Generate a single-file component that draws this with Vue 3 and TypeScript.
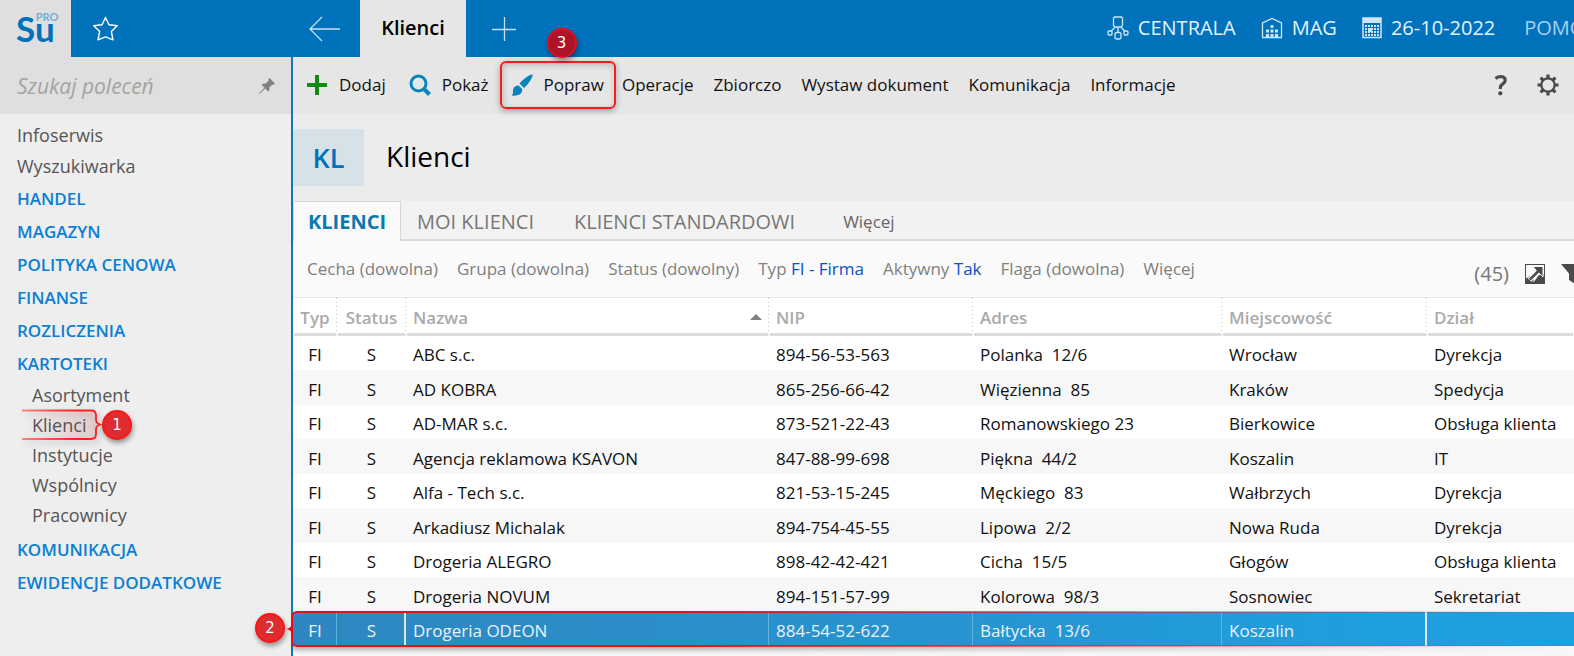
<script setup lang="ts">
import { ref } from 'vue'

interface Section {
  label: string
  children?: string[]
}

interface Client {
  typ: string
  status: string
  nazwa: string
  nip: string
  adres: string
  miejscowosc: string
  dzial: string
}

const shortcuts: string[] = ['Infoserwis', 'Wyszukiwarka']

const sections: Section[] = [
  { label: 'HANDEL' },
  { label: 'MAGAZYN' },
  { label: 'POLITYKA CENOWA' },
  { label: 'FINANSE' },
  { label: 'ROZLICZENIA' },
  { label: 'KARTOTEKI', children: ['Asortyment', 'Klienci', 'Instytucje', 'Wspólnicy', 'Pracownicy'] },
  { label: 'KOMUNIKACJA' },
  { label: 'EWIDENCJE DODATKOWE' },
]

const menus: string[] = ['Operacje', 'Zbiorczo', 'Wystaw dokument', 'Komunikacja', 'Informacje']

const filters: { name: string; value?: string }[] = [
  { name: 'Cecha (dowolna)' },
  { name: 'Grupa (dowolna)' },
  { name: 'Status (dowolny)' },
  { name: 'Typ', value: 'FI - Firma' },
  { name: 'Aktywny', value: 'Tak' },
  { name: 'Flaga (dowolna)' },
  { name: 'Więcej' },
]

const row = (nazwa: string, nip: string, adres: string, miejscowosc: string, dzial: string): Client => ({
  typ: 'FI',
  status: 'S',
  nazwa,
  nip,
  adres,
  miejscowosc,
  dzial,
})

const clients: Client[] = [
  row('ABC s.c.', '894-56-53-563', 'Polanka  12/6', 'Wrocław', 'Dyrekcja'),
  row('AD KOBRA', '865-256-66-42', 'Więzienna  85', 'Kraków', 'Spedycja'),
  row('AD-MAR s.c.', '873-521-22-43', 'Romanowskiego 23', 'Bierkowice', 'Obsługa klienta'),
  row('Agencja reklamowa KSAVON', '847-88-99-698', 'Piękna  44/2', 'Koszalin', 'IT'),
  row('Alfa - Tech s.c.', '821-53-15-245', 'Męckiego  83', 'Wałbrzych', 'Dyrekcja'),
  row('Arkadiusz Michalak', '894-754-45-55', 'Lipowa  2/2', 'Nowa Ruda', 'Dyrekcja'),
  row('Drogeria ALEGRO', '898-42-42-421', 'Cicha  15/5', 'Głogów', 'Obsługa klienta'),
  row('Drogeria NOVUM', '894-151-57-99', 'Kolorowa  98/3', 'Sosnowiec', 'Sekretariat'),
  row('Drogeria ODEON', '884-54-52-622', 'Bałtycka  13/6', 'Koszalin', ''),
]

const query = ref('')
const selected = ref(8)
</script>

<template>
  <div class="app">
    <header class="top">
      <a class="logo" href="#" aria-label="Su PRO">
        <span class="logo-su">Su</span><span class="logo-pro">PRO</span>
      </a>
      <button class="top-btn star" type="button" aria-label="Ulubione">
        <svg width="27" height="27" viewBox="0 0 27 27">
          <path d="M13.500 2.500 17 9.800 25.300 10.700 19.300 16.400 21 24.800 13.500 21.800 6 24.800 7.700 16.400 1.700 10.700 10 9.800Z" fill="none" stroke="#fff" stroke-width="1.400" stroke-linejoin="round" />
        </svg>
      </button>
      <button class="top-btn back" type="button" aria-label="Wstecz">
        <svg width="32" height="26" viewBox="0 0 32 26">
          <path d="M31 13H1M13 1 1 13 13 25" fill="none" stroke="#c4e0f3" stroke-width="1.300" />
        </svg>
      </button>
      <button class="window-tab" type="button">Klienci</button>
      <button class="top-btn plus" type="button" aria-label="Nowa karta">
        <svg width="24" height="26" viewBox="0 0 24 26">
          <path d="M0 13.500H24M12.500 1V25" fill="none" stroke="#c4e0f3" stroke-width="1.300" />
        </svg>
      </button>
      <div class="context">
        <button class="ctx" type="button">
          <svg width="22" height="24" viewBox="0 0 22 24" fill="none" stroke="#cfe6f5" stroke-width="1.300">
            <path d="M7.500 1h7l1 1v7.500L14 11H8L6.500 9.500V2ZM8 11 4 15.500M11 11v5M14 11l4 4.500" />
            <rect x="1" y="15" width="4" height="4" rx="1" />
            <rect x="8" y="16.500" width="6" height="6.500" rx="2" />
            <rect x="17" y="15" width="4" height="4" rx="1" />
          </svg>
          CENTRALA
        </button>
        <button class="ctx" type="button">
          <svg width="22" height="24" viewBox="0 0 22 24">
            <path d="M1.500 21.500V7L11 2.500 20.500 7v14.500Z" fill="none" stroke="#cfe6f5" stroke-width="1.300" />
            <path d="M9.500 9h3v3h-3zM5 13.500h3v3H5zM9.500 13.500h3v3h-3zM14 13.500h3v3h-3zM5 18h3v3H5zM9.500 18h3v3h-3zM14 18h3v3h-3z" fill="#cfe6f5" />
          </svg>
          MAG
        </button>
        <button class="ctx" type="button">
          <svg width="20" height="22" viewBox="0 0 20 22">
            <path d="M1 1h18v19.500H1Z" fill="none" stroke="#cfe6f5" stroke-width="1.500" />
            <path d="M1 1h18v5H1Z" fill="#cfe6f5" />
            <path d="M3 9h14M3 12h14M3 15h14M3 18h14" stroke="#cfe6f5" stroke-width="1.800" stroke-dasharray="2 1" />
            <path d="M6 11h4v4H6z" fill="#cfe6f5" />
          </svg>
          26-10-2022
        </button>
        <button class="ctx help" type="button">POMOC</button>
      </div>
    </header>

    <div class="body">
      <aside class="side">
        <div class="search">
          <input v-model="query" type="text" placeholder="Szukaj poleceń" aria-label="Szukaj poleceń" />
          <button type="button" aria-label="Przypnij">
            <svg width="18" height="18" viewBox="0 0 18 18">
              <path d="M11.500 1 17 6.500 15.500 7.800 14.400 7.400 11.500 10.300Q12 13 10.300 14.500L7.200 11.500 2 16.500 0.800 17.200 1.500 16 6.500 10.800 3.500 7.700Q5 6 7.700 6.500L10.600 3.600 10.200 2.500Z" fill="#808080" />
            </svg>
          </button>
        </div>
        <nav class="nav" aria-label="Moduły">
          <a v-for="s in shortcuts" :key="s" class="shortcut" href="#">{{ s }}</a>
          <template v-for="section in sections" :key="section.label">
            <a class="section" href="#">{{ section.label }}</a>
            <div v-if="section.children" class="children">
              <a v-for="child in section.children" :key="child" class="child" href="#">
                <template v-if="child === 'Klienci'">
                  <svg class="frame-left" width="80" height="32" viewBox="0 0 80 32">
                    <defs>
                      <linearGradient id="fadeStroke" gradientUnits="userSpaceOnUse" x1="0" y1="0" x2="76" y2="0">
                        <stop offset="0" stop-color="#ff2020" stop-opacity="0.500" />
                        <stop offset="0.700" stop-color="#ff2020" stop-opacity="1" />
                      </linearGradient>
                      <linearGradient id="fadeFill" x1="0" y1="0" x2="1" y2="0">
                        <stop offset="0" stop-color="#e05050" stop-opacity="0" />
                        <stop offset="1" stop-color="#e05050" stop-opacity="0.180" />
                      </linearGradient>
                    </defs>
                    <path d="M0 1.500H69Q74 1.500 74 6.500V11Q74 14 78 15.500Q74 17 74 20V25Q74 30 69 30H0" fill="url(#fadeFill)" stroke="url(#fadeStroke)" stroke-width="1.800" />
                  </svg>
                  <span class="badge badge-one">1</span>
                </template>
                <span class="child-text">{{ child }}</span>
              </a>
            </div>
          </template>
        </nav>
      </aside>

      <main class="main">
        <div class="toolbar">
          <button class="tool" type="button">
            <svg width="22" height="22" viewBox="0 0 22 22"><path d="M9 1h4v8h8v4h-8v8H9v-8H1V9h8Z" fill="#138a13" /></svg>
            Dodaj
          </button>
          <button class="tool show" type="button">
            <svg width="22" height="22" viewBox="0 0 22 22" fill="none" stroke="#0a84bd">
              <circle cx="9.500" cy="9.500" r="7.500" stroke-width="3" />
              <path d="M15 15 20.500 20.500" stroke-width="4" />
            </svg>
            Pokaż
          </button>
          <button class="tool marked" type="button">
            <svg width="22" height="22" viewBox="0 0 22 22" fill="#0a84bd">
              <path d="M21.500 0.500Q22 2 19 7 16.500 11 13 14L8.500 9.500Q12 5.500 16 2.800 20 0 21.500 0.500Z" />
              <path d="M7.200 11.200 11.200 15Q11.500 18.500 8.500 20.500 6 22 0.500 21.500 2.500 20 2 16.500 2 12 7.200 11.200Z" />
            </svg>
            Popraw
            <span class="badge badge-three">3</span>
          </button>
          <button v-for="m in menus" :key="m" class="tool" type="button">{{ m }}</button>
          <div class="tool-end">
            <button class="icon-btn" type="button" aria-label="Pomoc">
              <svg width="14" height="22" viewBox="0 0 14 22">
                <path d="M1.500 4.500Q4 2.500 7 2.500 11.200 2.700 11.200 6.200 11.200 8.200 8.800 9.800 6.300 11.500 6.300 13.500V15" fill="none" stroke="#4a4a4a" stroke-width="3.200" />
                <circle cx="6.300" cy="19.300" r="2.100" fill="#4a4a4a" />
              </svg>
            </button>
            <button class="icon-btn" type="button" aria-label="Ustawienia">
              <svg width="22" height="22" viewBox="0 0 22 22" fill="none" stroke="#4a4a4a">
                <circle cx="11" cy="11" r="6.700" stroke-width="2.200" />
                <path d="M11 4.500V.5M11 17.500v4M4.500 11h-4M17.500 11h4M6.400 6.400 3.600 3.600M15.600 6.400l2.800-2.800M6.400 15.600l-2.800 2.800M15.600 15.600l2.800 2.800" stroke-width="3.200" />
              </svg>
            </button>
          </div>
        </div>

        <div class="title">
          <span class="tile">KL</span>
          <h1>Klienci</h1>
        </div>

        <div class="tabs" role="tablist">
          <button class="tab active" type="button" role="tab" aria-selected="true">KLIENCI</button>
          <button class="tab" type="button" role="tab" aria-selected="false">MOI KLIENCI</button>
          <button class="tab wide" type="button" role="tab" aria-selected="false">KLIENCI STANDARDOWI</button>
          <button class="tab more" type="button">Więcej</button>
        </div>

        <div class="filters">
          <button v-for="f in filters" :key="f.name" class="filter" type="button">
            {{ f.name }}<span v-if="f.value" class="value">{{ ' ' + f.value }}</span>
          </button>
          <div class="filter-end">
            <span class="count">(45)</span>
            <button class="icon-btn" type="button" aria-label="Powiększ">
              <svg width="20" height="20" viewBox="0 0 20 20">
                <path d="M0 0h20v20H0Z" fill="#4a4a4a" />
                <path d="M1 1H19V10L9 18 1 16Z" fill="#fafafa" />
                <path d="M1 19V14.500L5 12 9 16 6.500 19ZM19 19H8L14 11H19Z" fill="#4a4a4a" />
                <path d="M4.500 16 13 7.500" stroke="#fafafa" stroke-width="5" />
                <path d="M8 2.500H18V13L14.500 9.500 11 6.500Z" fill="#4a4a4a" stroke="#fafafa" stroke-width="1" />
                <path d="M4.800 15.700 14 6.500" stroke="#4a4a4a" stroke-width="2.600" />
              </svg>
            </button>
            <button class="icon-btn" type="button" aria-label="Filtruj">
              <svg width="22" height="20" viewBox="0 0 22 20"><path d="M0 0h22L14 9.500V20L8 16V9.500Z" fill="#4a4a4a" /></svg>
            </button>
          </div>
        </div>

        <table class="grid">
          <colgroup>
            <col class="c-typ" /><col class="c-status" /><col class="c-name" /><col class="c-nip" />
            <col class="c-addr" /><col class="c-city" /><col />
          </colgroup>
          <thead>
            <tr>
              <th class="mid">Typ</th>
              <th class="mid">Status</th>
              <th aria-sort="ascending">
                <div class="sorted">
                  Nazwa
                  <svg width="12" height="8" viewBox="0 0 12 8"><path d="M0 7 6 1l6 6Z" fill="#808080" /></svg>
                </div>
              </th>
              <th>NIP</th>
              <th>Adres</th>
              <th>Miejscowość</th>
              <th>Dział</th>
            </tr>
          </thead>
          <tbody>
            <tr v-for="(c, i) in clients" :key="c.nazwa" :class="{ selected: i === selected }" @click="selected = i">
              <td class="mid">
                {{ c.typ }}
                <template v-if="i === 8">
                  <span class="frame-row"></span>
                  <svg class="pointer" width="6" height="10" viewBox="0 0 6 10">
                    <path d="M6 0V10Q5 6 0.500 5 5 4 6 0Z" fill="#e01018" />
                  </svg>
                  <span class="badge badge-two">2</span>
                </template>
              </td>
              <td class="mid">{{ c.status }}</td>
              <td>{{ c.nazwa }}</td>
              <td>{{ c.nip }}</td>
              <td>{{ c.adres }}</td>
              <td>{{ c.miejscowosc }}</td>
              <td>{{ c.dzial }}</td>
            </tr>
          </tbody>
        </table>
      </main>
    </div>
  </div>
</template>

<style>
body {
  margin: 0;
}
</style>

<style scoped>
.app {
  display: flex;
  flex-direction: column;
  min-height: 100vh;
  overflow: hidden;
  font-family: "Open Sans", "Noto Sans", sans-serif;
  font-size: 17px;
  color: #111;
}

button {
  padding: 0;
  border: 0;
  background: none;
  font: inherit;
  color: inherit;
  white-space: nowrap;
  cursor: pointer;
}

a {
  color: inherit;
  text-decoration: none;
}

svg {
  display: block;
  flex: none;
}

.top {
  display: flex;
  align-items: stretch;
  height: 57px;
  background: #0072bc;
}

.logo {
  display: flex;
  align-items: flex-start;
  flex: none;
  box-sizing: border-box;
  width: 71px;
  padding: 6px 0 0 16px;
  background: #dfdfdf;
  font-family: Lato, sans-serif;
}

.logo-su {
  font-size: 35px;
  line-height: 44px;
  font-weight: 700;
  color: #0072bc;
}

.logo-pro {
  margin-left: -19px;
  padding-top: 5px;
  font-size: 11px;
  line-height: 12px;
  font-weight: 700;
  color: #72aed6;
}

.top-btn {
  display: flex;
  align-items: center;
  justify-content: center;
}

.star {
  width: 68px;
}

.back {
  width: 70px;
  margin-left: 151px;
}

.window-tab {
  width: 106px;
  padding-bottom: 2px;
  background: #e6e6e6;
  font-size: 20px;
  font-weight: 600;
  color: #000;
}

.plus {
  width: 76px;
}

.context {
  display: flex;
  align-items: center;
  gap: 25px;
  margin-left: auto;
  margin-right: -24px;
  padding-bottom: 2px;
  font-size: 20px;
  color: #e3f1fa;
}

.ctx {
  display: flex;
  align-items: center;
  gap: 9px;
  line-height: 28px;
}

.help {
  margin-left: 4px;
  color: #a9d0ea;
}

.body {
  display: flex;
  flex: 1;
}

.side {
  flex: none;
  width: 291px;
  border-right: 2px solid #1478b4;
  background: #eee;
}

.search {
  display: flex;
  align-items: center;
  height: 57px;
  padding: 0 15px 0 17px;
  background: #dfdfdf;
}

.search input {
  flex: 1;
  min-width: 0;
  padding: 0;
  border: 0;
  outline: 0;
  background: none;
  font: italic 21px/28px "Open Sans", "Noto Sans", sans-serif;
  color: #555;
}

.search input::placeholder {
  color: #a3a3a3;
}

.nav {
  display: flex;
  flex-direction: column;
  align-items: flex-start;
  padding: 6px 17px;
  font-size: 18px;
  color: #555;
}

.shortcut {
  line-height: 31px;
}

.section {
  font-size: 17px;
  font-weight: 600;
  line-height: 33px;
  color: #0a7fd6;
}

.children {
  display: flex;
  flex-direction: column;
  align-items: flex-start;
  padding: 0 0 3px 15px;
}

.child {
  position: relative;
  line-height: 30px;
}

.child-text {
  position: relative;
}

.frame-left {
  position: absolute;
  left: -10px;
  top: -1px;
  filter: drop-shadow(2px 3px 3px rgba(0, 0, 0, 0.25));
}

.badge {
  position: absolute;
  box-sizing: border-box;
  width: 30px;
  height: 30px;
  border: 2px solid #ff1414;
  border-radius: 50%;
  background: #de2c30;
  box-shadow: 1px 3px 5px rgba(0, 0, 0, 0.4);
  font: 15px/26px "DejaVu Sans", sans-serif;
  text-align: center;
  color: #fff;
  z-index: 2;
}

.badge-one {
  left: 70px;
  top: 0;
}

.badge-two {
  left: -38px;
  top: 1px;
}

.badge-three {
  left: 45px;
  top: -35px;
  border-color: #e80c1c;
  background: #ad1428;
}

.main {
  display: flex;
  flex-direction: column;
  flex: 1;
  min-width: 0;
  background: #f7f7f7;
}

.toolbar {
  display: flex;
  align-items: center;
  gap: 20px;
  box-sizing: border-box;
  height: 57px;
  padding: 0 15px 2px 13px;
  background: #e6e6e6;
}

.tool {
  display: flex;
  align-items: center;
  gap: 11px;
  line-height: 26px;
}

.show {
  margin-left: 3px;
}

.marked {
  position: relative;
  height: 48px;
  margin: 0 -14px 0 -9px;
  padding: 0 10px 0 9px;
  border: 2px solid #f81c1c;
  border-radius: 6px;
  box-shadow: 0 2px 6px rgba(0, 0, 0, 0.3), inset 1px 2px 6px rgba(0, 0, 0, 0.2);
}

.tool-end {
  display: flex;
  align-items: center;
  gap: 29px;
  margin-left: auto;
}

.title {
  display: flex;
  align-items: center;
  gap: 22px;
  height: 87px;
  background: #ececec;
}

.tile {
  width: 71px;
  background: #d7e2e8;
  font-size: 27px;
  font-weight: 600;
  line-height: 57px;
  text-align: center;
  color: #0072bc;
}

h1 {
  margin: 0;
  padding-bottom: 3px;
  font-size: 28px;
  font-weight: 400;
  color: #000;
}

.tabs {
  display: flex;
  height: 40px;
  box-shadow: inset 0 -2px #dadada;
  background: #f2f2f2;
}

.tab {
  padding: 1px 16px 0;
  font-size: 20px;
  line-height: 40px;
  color: #777;
}

.tab.active {
  padding: 0 14px;
  border: 1px solid #d6d6d6;
  border-bottom: 0;
  background: #fafafa;
  font-weight: 700;
  line-height: 40px;
  color: #0a79ad;
}

.tab.wide {
  padding: 1px 24px 0;
}

.tab.more {
  padding: 1px 24px 0;
  font-size: 17px;
  color: #666;
}

.filters {
  display: flex;
  align-items: center;
  gap: 19px;
  height: 56px;
  padding-left: 14px;
  background: #fafafa;
  color: #808080;
}

.filter {
  line-height: 56px;
}

.value {
  white-space: pre;
  color: #0a50c8;
}

.filter-end {
  display: flex;
  align-items: center;
  gap: 16px;
  margin: 9px -9px 0 auto;
}

.count {
  font-size: 20px;
  line-height: 28px;
  color: #777;
}

.grid {
  width: 100%;
  border-spacing: 0;
  table-layout: fixed;
  background: #fff;
}

.c-typ {
  width: 44px;
}

.c-status {
  width: 69px;
}

.c-name {
  width: 363px;
}

.c-nip {
  width: 204px;
}

.c-addr {
  width: 249px;
}

.c-city {
  width: 205px;
}

th {
  position: relative;
  box-sizing: border-box;
  height: 39px;
  padding: 0 7px;
  border-top: 1px solid #e6e6e6;
  background: repeating-linear-gradient(#c4c4c4 0 1px, transparent 1px 4px) right / 1px 100% no-repeat;
  font-weight: 600;
  text-align: left;
  color: #aaa;
}

th:last-child {
  background: none;
}

th::after {
  content: "";
  position: absolute;
  right: 1px;
  bottom: 0;
  left: 1px;
  height: 3px;
  background: #dcdcdc;
}

.sorted {
  display: flex;
  align-items: center;
  justify-content: space-between;
}

td {
  height: 31px;
  padding: 3px 0 0 7px;
  line-height: 31px;
  white-space: pre;
  color: #111;
}

th.mid,
td.mid {
  padding-right: 0;
  padding-left: 0;
  text-align: center;
}

td.mid {
  white-space: nowrap;
}

tbody tr:nth-child(even) td {
  height: 32px;
  background: #f7f7f7;
}

tbody .selected {
  position: relative;
  background: linear-gradient(90deg, #2f86c0, #2794cf 50%, #1e9fe0 85%);
}

tbody .selected td {
  box-shadow: inset -1px 0 #5fb2e0;
  color: #eaf3fa;
}

tbody .selected td:nth-child(2),
tbody .selected td:nth-child(6) {
  box-shadow: inset -2px 0 #d9e8f3;
}

tbody .selected td:last-child {
  box-shadow: none;
}

.frame-row {
  position: absolute;
  top: -1px;
  right: 0;
  bottom: -1px;
  left: -2px;
  border: 2px solid #e81018;
  border-right: 0;
  border-radius: 6px 0 0 6px;
  box-shadow: 0 3px 5px rgba(0, 0, 0, 0.3);
  mask-image: linear-gradient(90deg, #000 30%, transparent);
  mask-clip: no-clip;
}

.pointer {
  position: absolute;
  top: 12px;
  left: -7px;
}
</style>
